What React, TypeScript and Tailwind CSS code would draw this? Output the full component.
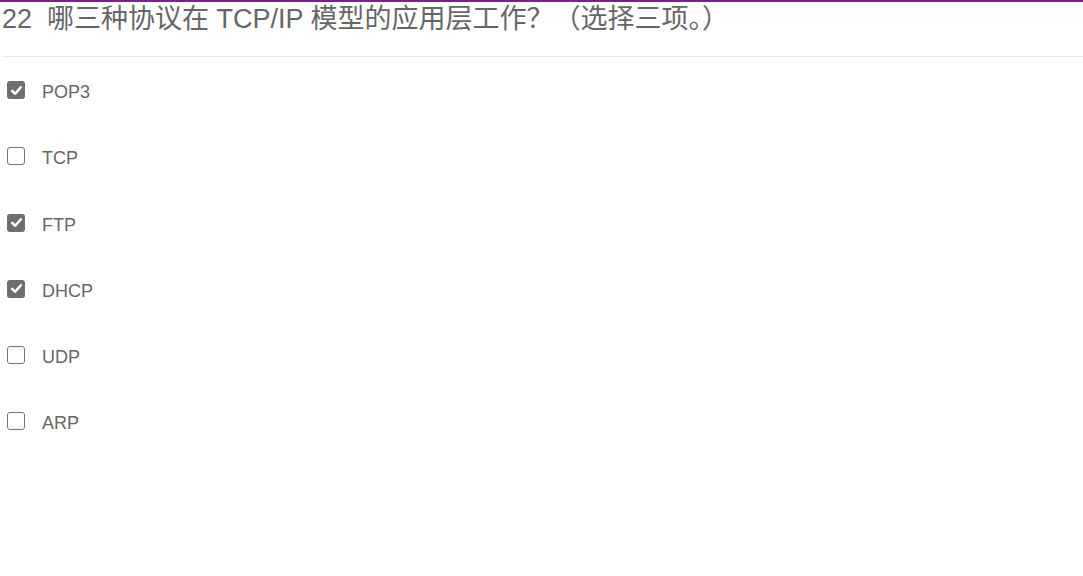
import React from "react";

const options = [
  { label: "POP3", checked: true },
  { label: "TCP", checked: false },
  { label: "FTP", checked: true },
  { label: "DHCP", checked: true },
  { label: "UDP", checked: false },
  { label: "ARP", checked: false },
];

function Box({ checked }: { checked: boolean }) {
  if (checked) {
    return (
      <span className="flex h-[18px] w-[18px] items-center justify-center rounded-[3px] bg-[#6e6e6e]">
        <svg width="13" height="13" viewBox="0 0 12 12">
          <path d="M2 6.3 L4.8 9 L10 3" fill="none" stroke="#fff" strokeWidth="2.3" strokeLinecap="round" strokeLinejoin="round" />
        </svg>
      </span>
    );
  }
  return <span className="block h-[18px] w-[18px] rounded-[3px] border-[1.5px] border-[#767676] bg-white" />;
}

export default function App() {
  return (
    <div className="min-h-[576px] w-full bg-white font-['Liberation_Sans','Noto_Sans_CJK_SC',sans-serif]">
      <div className="h-[2px] bg-[#7b1f8c]" />
      <div className="ml-[2px] h-[55px] border-b border-[#e8e8e8]">
        <h1 className="pt-[1px] text-[27px] leading-[32px] text-[#666]">
          22&nbsp; 哪三种协议在 TCP/IP 模型的应用层工作？（选择三项。）
        </h1>
      </div>
      <ul className="pt-[24px]">
        {options.map((o) => (
          <li key={o.label} className="flex h-[66.25px] items-start pl-[7px]">
            <Box checked={o.checked} />
            <span className="ml-[17px] mt-[2px] text-[18px] leading-[18px] text-[#666]">{o.label}</span>
          </li>
        ))}
      </ul>
    </div>
  );
}
